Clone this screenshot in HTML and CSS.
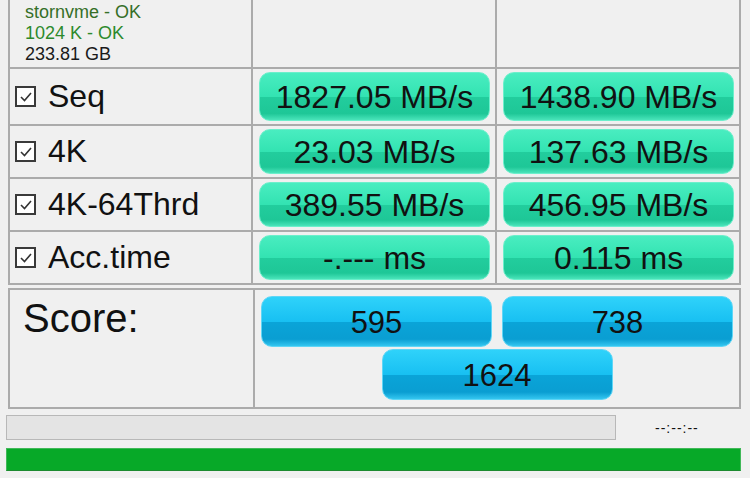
FILE: index.html
```html
<!DOCTYPE html>
<html lang="en">
<head>
  <meta charset="UTF-8">
  <title>AS SSD Benchmark</title>
  <link rel="stylesheet" href="styles.css">
</head>
<body>
  <div class="bench">
    <div class="grid">
      <div class="cell info">
        <div class="drv">stornvme - OK</div>
        <div class="align">1024 K - OK</div>
        <div class="size">233.81 GB</div>
      </div>
      <div class="cell"></div>
      <div class="cell"></div>

      <div class="cell label"><span class="check"><svg width="14" height="14" viewBox="0 0 14 14"><polyline points="2,7 5.5,10.5 12,3" fill="none" stroke="#333" stroke-width="1.6"/></svg></span>Seq</div>
      <div class="cell"><div class="val">1827.05 MB/s</div></div>
      <div class="cell"><div class="val">1438.90 MB/s</div></div>

      <div class="cell label"><span class="check"><svg width="14" height="14" viewBox="0 0 14 14"><polyline points="2,7 5.5,10.5 12,3" fill="none" stroke="#333" stroke-width="1.6"/></svg></span>4K</div>
      <div class="cell"><div class="val">23.03 MB/s</div></div>
      <div class="cell"><div class="val">137.63 MB/s</div></div>

      <div class="cell label"><span class="check"><svg width="14" height="14" viewBox="0 0 14 14"><polyline points="2,7 5.5,10.5 12,3" fill="none" stroke="#333" stroke-width="1.6"/></svg></span>4K-64Thrd</div>
      <div class="cell"><div class="val">389.55 MB/s</div></div>
      <div class="cell"><div class="val">456.95 MB/s</div></div>

      <div class="cell label"><span class="check"><svg width="14" height="14" viewBox="0 0 14 14"><polyline points="2,7 5.5,10.5 12,3" fill="none" stroke="#333" stroke-width="1.6"/></svg></span>Acc.time</div>
      <div class="cell"><div class="val">-.--- ms</div></div>
      <div class="cell"><div class="val">0.115 ms</div></div>
    </div>

    <div class="score">
      <div class="score-label">Score:</div>
      <div class="score-vals">
        <div class="pill">595</div>
        <div class="pill">738</div>
        <div class="pill">1624</div>
      </div>
    </div>

    <div class="progress-row">
      <div class="progress"></div>
      <div class="time">--:--:--</div>
    </div>
    <div class="done-bar"></div>
  </div>
</body>
</html>
```

FILE: styles.css
```css
* { box-sizing: border-box; }
body {
  margin: 0;
  background: #f0f0f0;
  font-family: 'Liberation Sans', Arial, sans-serif;
  color: #111;
}
.bench {
  width: 750px;
  height: 478px;
  overflow: hidden;
}
.grid {
  margin-left: 8px;
  width: 733px;
  display: grid;
  grid-template-columns: 245px 244px 244px;
  grid-template-rows: 69px 57px 53px 53px 53px;
}
.cell {
  border-right: 2px solid #ababab;
  border-bottom: 2px solid #ababab;
  display: flex;
}
.cell:nth-child(3n+1) {
  border-left: 2px solid #ababab;
}
.info {
  flex-direction: column;
  padding: 2px 0 0 15px;
  font-size: 18px;
  line-height: 21px;
}
.drv { color: #356f28; }
.align { color: #2c8a2c; }
.size { color: #1a1a1a; }
.label {
  align-items: center;
  font-size: 32px;
  padding-left: 5px;
}
.check {
  width: 21px;
  height: 21px;
  border: 2px solid #3a3a3a;
  background: #fff;
  display: flex;
  align-items: center;
  justify-content: center;
  margin-right: 12px;
  flex: none;
}
.val {
  flex: 1;
  margin: 3px 5px 3px 6px;
  border-radius: 11px;
  border: 1px solid #6cefcb;
  background: linear-gradient(#49edc0 0%, #33e3b2 50%, #22cd9d 52%, #1ec797 86%, #4ae4ba 100%);
  display: flex;
  align-items: center;
  justify-content: center;
  font-size: 32px;
  padding-top: 2px;
}
.score {
  margin: 3px 0 0 8px;
  width: 733px;
  height: 121px;
  border: 2px solid #ababab;
  display: grid;
  grid-template-columns: 245px 1fr;
}
.score-label {
  border-right: 2px solid #ababab;
  font-size: 40px;
  line-height: 40px;
  padding: 8px 0 0 13px;
}
.score-vals {
  display: flex;
  flex-wrap: wrap;
  justify-content: center;
  align-content: flex-start;
  gap: 2px 10px;
  padding-top: 6px;
}
.pill {
  width: 231px;
  height: 51px;
  border-radius: 11px;
  border: 1px solid #5fd6f6;
  background: linear-gradient(#2fd2fa 0%, #18c0f2 50%, #0aa4d8 52%, #0a9ed2 86%, #34c6f0 100%);
  display: flex;
  align-items: center;
  justify-content: center;
  font-size: 31px;
  padding-top: 2px;
}
.progress-row {
  display: flex;
  align-items: center;
  margin: 6px 0 0 6px;
}
.progress {
  width: 610px;
  height: 25px;
  border: 1px solid #b8b8b8;
  background: #e4e4e4;
}
.time {
  margin-left: 39px;
  font-size: 14px;
  letter-spacing: 1px;
}
.done-bar {
  margin: 8px 0 0 6px;
  width: 735px;
  height: 23px;
  background: #07a928;
  border: 1px solid #40b858;
  border-bottom-color: #1d8a30;
}
```
